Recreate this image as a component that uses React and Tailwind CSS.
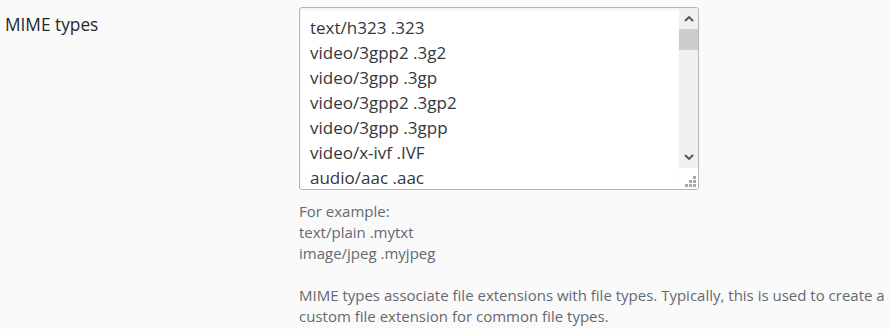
import React from "react";

const mimeTypes = [
  "text/h323 .323",
  "video/3gpp2 .3g2",
  "video/3gpp .3gp",
  "video/3gpp2 .3gp2",
  "video/3gpp .3gpp",
  "video/x-ivf .IVF",
  "audio/aac .aac",
];

function Chevron({ up }) {
  return (
    <svg width="10" height="7" viewBox="0 0 10 7" className="text-[#505050]">
      <path
        d={up ? "M1 6 L5 2 L9 6" : "M1 1 L5 5 L9 1"}
        fill="none"
        stroke="currentColor"
        strokeWidth="1.8"
      />
    </svg>
  );
}

function Grip() {
  return (
    <svg width="12" height="12" viewBox="0 0 12 12">
      <g fill="#a8a8a8">
        <rect x="8" y="0" width="3" height="3" />
        <rect x="4" y="4" width="3" height="3" />
        <rect x="8" y="4" width="3" height="3" />
        <rect x="0" y="8" width="3" height="3" />
        <rect x="4" y="8" width="3" height="3" />
        <rect x="8" y="8" width="3" height="3" />
      </g>
    </svg>
  );
}

export default function App() {
  return (
    <div className="w-[889px] h-[329px] bg-[#fafafa] font-['Open_Sans',sans-serif] flex overflow-hidden">
      {/* Label */}
      <div className="w-[299px] shrink-0 pl-[5px] pt-[13px]">
        <span className="text-[17.3px] leading-[24px] text-[#23282d]">MIME types</span>
      </div>

      {/* Field */}
      <div className="flex-1 pt-[7px]">
        <div className="w-[400px] h-[183px] border border-[#b4b4b4] rounded-[3px] bg-white flex overflow-hidden">
          <div className="flex-1 overflow-hidden pl-[10px] pt-[7px] shadow-[inset_0_2px_2px_rgba(0,0,0,0.05)]">
            {mimeTypes.map((m) => (
              <div key={m} className="text-[17px] leading-[25px] text-[#32373c] whitespace-nowrap">
                {m}
              </div>
            ))}
          </div>
          <div className="w-[19px] shrink-0 flex flex-col">
            <div className="h-[160px] bg-[#f0f0f0] flex flex-col">
              <div className="h-[21px] flex items-center justify-center">
                <Chevron up />
              </div>
              <div className="h-[21px] bg-[#cdcdcd]" />
              <div className="flex-1" />
              <div className="h-[21px] flex items-center justify-center">
                <Chevron />
              </div>
            </div>
            <div className="flex-1 bg-white flex items-end justify-end pr-[1px] pb-[1px]">
              <Grip />
            </div>
          </div>
        </div>

        <div className="pt-[11px] text-[15px] leading-[21px] text-[#646970]">
          <p>For example:</p>
          <p>text/plain .mytxt</p>
          <p>image/jpeg .myjpeg</p>
          <p className="mt-[21px] w-[590px]">
            MIME types associate file extensions with file types. Typically, this is used to create a custom file extension for common file types.
          </p>
        </div>
      </div>
    </div>
  );
}
